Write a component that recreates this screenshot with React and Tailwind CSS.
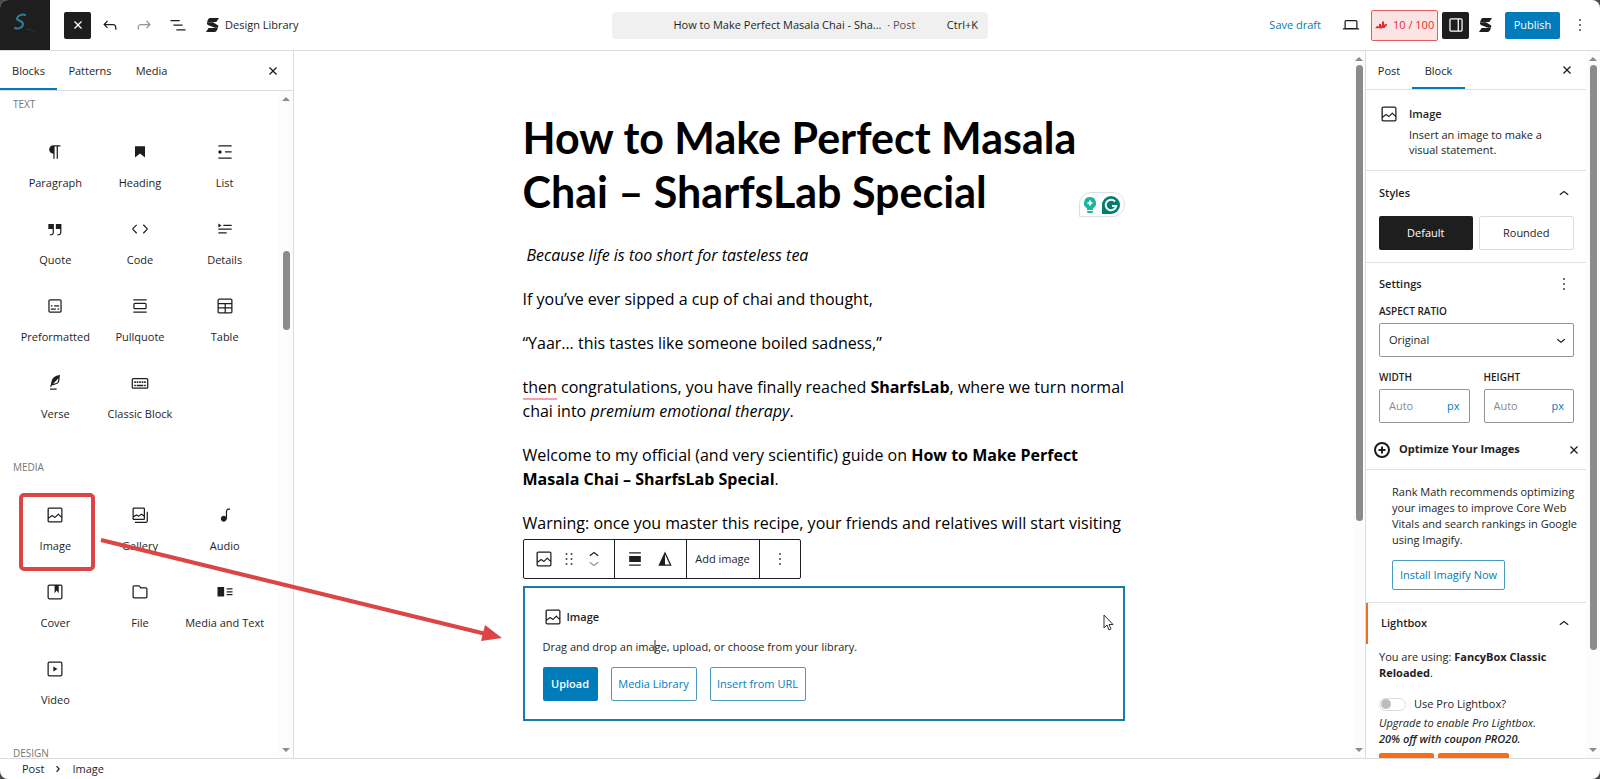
import React from 'react';
import clsx from 'clsx';

const icons = {
  paragraph: 'm9.99609 14v-.2251l.00391.0001v6.225h1.5v-14.5h2.5v14.5h1.5v-14.5h3v-1.5h-8.50391c-2.76142 0-5 2.23858-5 5 0 2.7614 2.23858 5 5 5z',
  heading: 'M6 5V18.5911L12 13.8473L18 18.5911V5H6Z',
  list: 'M4 4v1.5h16V4H4zm8 8.5h8V11h-8v1.5zM4 20h16v-1.5H4V20zm4-8c0-1.1-.9-2-2-2s-2 .9-2 2 .9 2 2 2 2-.9 2-2z',
  quote: 'M13 6v6h5.2v4c0 .8-.2 1.4-.5 1.7-.6.6-1.6.6-2.5.5h-.3v1.5h.5c1 0 2.3-.1 3.3-1 .6-.6 1-1.6 1-2.8V6H13zm-9 6h5.2v4c0 .8-.2 1.4-.5 1.7-.6.6-1.6.6-2.5.5h-.3v1.5h.5c1 0 2.3-.1 3.3-1 .6-.6 1-1.6 1-2.8V6H4v6z',
  code: 'M20.8 10.7l-4.3-4.3-1.1 1.1 4.3 4.3c.1.1.1.3 0 .4l-4.3 4.3 1.1 1.1 4.3-4.3c.7-.8.7-1.9 0-2.6zM4.2 11.8l4.3-4.3-1-1-4.3 4.3c-.7.7-.7 1.8 0 2.5l4.3 4.3 1.1-1.1-4.3-4.3c-.2-.1-.2-.3-.1-.4z',
  details: 'M4 16h10v1.5H4V16Zm0-4.5h16V13H4v-1.5ZM10 7h10v1.5H10V7ZM4 5.25l4 2.5-4 2.5v-5Z',
  preformatted: 'M18 4H6c-1.1 0-2 .9-2 2v12c0 1.1.9 2 2 2h12c1.1 0 2-.9 2-2V6c0-1.1-.9-2-2-2zm.5 14c0 .3-.2.5-.5.5H6c-.3 0-.5-.2-.5-.5V6c0-.3.2-.5.5-.5h12c.3 0 .5.2.5.5v12zM7 16.5h6V15H7v1.5zm4-4h6V11h-6v1.5zM9 11H7v1.5h2V11zm6 5.5h2V15h-2v1.5z',
  pullquote: 'M18 8H6c-1.1 0-2 .9-2 2v4c0 1.1.9 2 2 2h12c1.1 0 2-.9 2-2v-4c0-1.1-.9-2-2-2zm.5 6c0 .3-.2.5-.5.5H6c-.3 0-.5-.2-.5-.5v-4c0-.3.2-.5.5-.5h12c.3 0 .5.2.5.5v4zM4 4v1.5h16V4H4zm0 16h16v-1.5H4V20z',
  table: 'M19 3H5c-1.1 0-2 .9-2 2v14c0 1.1.9 2 2 2h14c1.1 0 2-.9 2-2V5c0-1.1-.9-2-2-2ZM5 4.5h14c.3 0 .5.2.5.5v3.5h-15V5c0-.3.2-.5.5-.5Zm8 5.5h6.5v3.5H13V10Zm-1.5 3.5h-7V10h7v3.5Zm-7 5.5v-4h7v4.5H5c-.3 0-.5-.2-.5-.5Zm14.5.5h-6V15h6.5v4c0 .3-.2.5-.5.5Z',
  verse: 'M17.8 2l-.9.3c-.1 0-3.6 1-5.2 2.1C10 5.5 9.3 6.5 8.9 7.1c-.6.9-1.7 4.7-1.7 6.3l-.9 2.3c-.2.4 0 .8.4 1 .1 0 .2.1.3.1.3 0 .6-.2.7-.5l.6-1.5c.3 0 .7-.1 1.2-.2.7-.1 1.4-.3 2.2-.5.8-.2 1.6-.5 2.4-.8.7-.3 1.4-.7 1.9-1.2s.8-1.2 1-1.9c.2-.7.3-1.6.4-2.4.1-.8.1-1.7.2-2.5 0-.8.1-1.5.2-2.1V2zm-1.9 5.6c-.1.8-.2 1.5-.3 2.1-.2.6-.4 1-.6 1.3-.3.3-.8.6-1.4.9-.7.3-1.4.5-2.2.8-.6.2-1.3.3-1.8.4L15 7.5c.3-.3.6-.7 1-1.1 0 .4 0 .8-.1 1.2zM6 20h8v-1.5H6V20z',
  classic: 'M20 6H4c-1.1 0-2 .9-2 2v9c0 1.1.9 2 2 2h16c1.1 0 2-.9 2-2V8c0-1.1-.9-2-2-2zm.5 11c0 .3-.2.5-.5.5H4c-.3 0-.5-.2-.5-.5V8c0-.3.2-.5.5-.5h16c.3 0 .5.2.5.5v9zM10 10H8v2h2v-2zm-5 2h2v-2H5v2zm8-2h-2v2h2v-2zm-5 6h8v-2H8v2zm6-4h2v-2h-2v2zm3 0h2v-2h-2v2zm0 4h2v-2h-2v2zM5 16h2v-2H5v2z',
  image: 'M19 3H5c-1.1 0-2 .9-2 2v14c0 1.1.9 2 2 2h14c1.1 0 2-.9 2-2V5c0-1.1-.9-2-2-2zM5 4.5h14c.3 0 .5.2.5.5v8.4l-3-2.9c-.3-.3-.8-.3-1 0L11.9 14 9 12c-.3-.2-.6-.2-.8 0l-3.6 2.6V5c-.1-.3.1-.5.4-.5zm14 15H5c-.3 0-.5-.2-.5-.5v-2.4l4.1-3 3 1.9c.3.2.7.2.9-.1L16 12l3.5 3.4V19c0 .3-.2.5-.5.5z',
  gallery: 'M16.375 4.5H4.625a.125.125 0 0 0-.125.125v8.254l2.859-1.54a.75.75 0 0 1 .68-.016l2.384 1.142 2.89-2.074a.75.75 0 0 1 .874 0l2.313 1.66V4.625a.125.125 0 0 0-.125-.125Zm.125 9.398-2.75-1.975-2.813 2.02a.75.75 0 0 1-.76.067l-2.444-1.17L4.5 14.583v1.792c0 .069.056.125.125.125h11.75a.125.125 0 0 0 .125-.125v-2.477ZM4.625 3C3.728 3 3 3.728 3 4.625v11.75C3 17.273 3.728 18 4.625 18h11.75c.898 0 1.625-.727 1.625-1.625V4.625C18 3.728 17.273 3 16.375 3H4.625ZM20 8v11c0 .69-.31 1-.999 1H6v1.5h13.001c1.52 0 2.499-.982 2.499-2.5V8H20Z',
  audio: 'M17.7 4.3c-1.2 0-2.8 0-3.8 1-.6.6-.9 1.5-.9 2.6V14c-.6-.6-1.5-1-2.5-1C8.6 13 7 14.6 7 16.5S8.6 20 10.5 20c1.5 0 2.8-1 3.3-2.3.5-.8.7-1.8.7-2.5V7.9c0-.7.2-1.2.5-1.6.6-.6 1.8-.6 2.8-.6h.3V4.3h-.4z',
  cover: 'M18.7 3H5.3C4 3 3 4 3 5.3v13.4C3 20 4 21 5.3 21h13.4c1.3 0 2.3-1 2.3-2.3V5.3C21 4 20 3 18.7 3zm.8 15.7c0 .4-.4.8-.8.8H5.3c-.4 0-.8-.4-.8-.8V5.3c0-.4.4-.8.8-.8h6.2v8.9l2.5-3.1 2.5 3.1V4.5h2.2c.4 0 .8.4.8.8v13.4z',
  file: 'M19 6.2h-5.9l-.6-1.1c-.3-.7-1-1.1-1.8-1.1H5c-1.1 0-2 .9-2 2v11.8c0 1.1.9 2 2 2h14c1.1 0 2-.9 2-2V8.2c0-1.1-.9-2-2-2zm.5 11.6c0 .3-.2.5-.5.5H5c-.3 0-.5-.2-.5-.5V6c0-.3.2-.5.5-.5h5.8c.2 0 .4.1.4.3l1 2H19c.3 0 .5.2.5.5v9.5z',
  mediaText: 'M3 6v11.5h8V6H3Zm11 3h7V7.5h-7V9Zm7 3.5h-7V11h7v1.5ZM14 16h7v-1.5h-7V16Z',
  video: 'M18.7 3H5.3C4 3 3 4 3 5.3v13.4C3 20 4 21 5.3 21h13.4c1.3 0 2.3-1 2.3-2.3V5.3C21 4 20 3 18.7 3zm.8 15.7c0 .4-.4.8-.8.8H5.3c-.4 0-.8-.4-.8-.8V5.3c0-.4.4-.8.8-.8h13.4c.4 0 .8.4.8.8v13.4zM10 15l5-3-5-3v6z',
  undo: 'M18.3 11.7c-.6-.6-1.4-.9-2.3-.9H6.7l2.9-3.3-1.1-1-4.5 5L8.5 16l1-1-2.7-2.7H16c.5 0 .9.2 1.3.5 1 1 1 3.4 1 4.5v.3h1.5v-.2c0-1.5 0-4.3-1.5-5.7z',
  redo: 'M15.6 6.5l-1.1 1 2.9 3.3H8c-.9 0-1.7.3-2.3.9-1.4 1.5-1.4 4.2-1.4 5.6v.2h1.5v-.3c0-1.1 0-3.5 1-4.5.3-.3.7-.5 1.3-.5h9.2L14.5 15l1.1 1.1 4.6-4.6-4.6-5z',
  listView: 'M3 6h11v1.5H3V6Zm3.5 5.5h11V13h-11v-1.5ZM21 17H10v1.5h11V17Z',
  desktop: 'M20.5 16h-.7V8c0-1.1-.9-2-2-2H6.2c-1.1 0-2 .9-2 2v8h-.7c-.8 0-1.5.7-1.5 1.5h20c0-.8-.7-1.5-1.5-1.5zM5.7 8c0-.3.2-.5.5-.5h11.6c.3 0 .5.2.5.5v7.6H5.7V8z',
  drawer: 'M18 4H6c-1.1 0-2 .9-2 2v12c0 1.1.9 2 2 2h12c1.1 0 2-.9 2-2V6c0-1.1-.9-2-2-2zm-4 14.5H6c-.3 0-.5-.2-.5-.5V6c0-.3.2-.5.5-.5h8v13zm4.5-.5c0 .3-.2.5-.5.5h-2.5v-13H18c.3 0 .5.2.5.5v12z',
  more: 'M13 19h-2v-2h2v2zm0-6h-2v-2h2v2zm0-6h-2V5h2v2z',
  close: 'M12 13.06l3.712 3.713 1.061-1.06L13.061 12l3.712-3.712-1.06-1.06L12 10.938 8.288 7.227l-1.061 1.06L10.939 12l-3.712 3.712 1.06 1.061L12 13.061z',
  up: 'M6.5 12.4L12 8l5.5 4.4-.9 1.2L12 10l-4.5 3.6-1-1.2z',
  down: 'M17.5 11.6L12 16l-5.5-4.4.9-1.2L12 14l4.5-3.6 1 1.2z',
  right: 'M10.8622 8.04053L14.2805 12.0286L10.8622 16.0167L9.72327 15.0405L12.3049 12.0286L9.72327 9.01672L10.8622 8.04053Z',
  drag: 'M8 7h2V5H8v2zm0 6h2v-2H8v2zm0 6h2v-2H8v2zm6-14v2h2V5h-2zm0 8h2v-2h-2v2zm0 6h2v-2h-2v2z',
  align: 'M19 5.5H5V4h14v1.5ZM19 20H5v-1.5h14V20ZM5 8.5h14v7H5v-7Z',
  duotone: 'M12 3 4 20h16L12 3Zm0 3.6 5.6 11.9H12V6.6Z',
};

function Icon({ name, className = 'size-5' }) {
  return (
    <svg viewBox="0 0 24 24" fill="currentColor" fillRule="evenodd" className={clsx('shrink-0', className)} aria-hidden="true">
      <path d={icons[name]} />
    </svg>
  );
}

// Slanted bars folded into an "S"
function StackLogo() {
  return (
    <svg viewBox="0 0 13 14" className="h-[14px] w-[13px] shrink-0" fill="currentColor" aria-hidden="true">
      <path d="M3.500 0H13l-2.700 4H1.200C1.500 2.500 2.200.8 3.500 0Z" />
      <path d="M1 4.300h6l5.200 3.200c.3.800.1 1.500-.4 2.200H9L1.800 7C1 6.200.8 5.200 1 4.300Z" />
      <path d="M2.600 10h9.200c-.4 1.800-1.300 3.300-2.600 4H0Z" />
    </svg>
  );
}

const textBlocks = [
  ['paragraph', 'Paragraph'],
  ['heading', 'Heading'],
  ['list', 'List'],
  ['quote', 'Quote'],
  ['code', 'Code'],
  ['details', 'Details'],
  ['preformatted', 'Preformatted'],
  ['pullquote', 'Pullquote'],
  ['table', 'Table'],
  ['verse', 'Verse'],
  ['classic', 'Classic Block'],
];

const mediaBlocks = [
  ['image', 'Image'],
  ['gallery', 'Gallery'],
  ['audio', 'Audio'],
  ['cover', 'Cover'],
  ['file', 'File'],
  ['mediaText', 'Media and Text'],
  ['video', 'Video'],
];

function BlockGrid({ blocks }) {
  return (
    <div className="grid grid-cols-3 pr-3 pl-[13px]">
      {blocks.map(([icon, label]) => (
        <button key={label} type="button" className="flex h-[77px] flex-col items-center justify-center gap-[13px] leading-4 whitespace-nowrap">
          <Icon name={icon} />
          {label}
        </button>
      ))}
    </div>
  );
}

// Thumb placement is given as growing spacers so it follows the track height
function Scrollbar({ before, thumb, after, className = 'w-[14px]' }) {
  return (
    <div className={clsx('flex shrink-0 flex-col items-center bg-[#fcfcfc] py-[6px]', className)} aria-hidden="true">
      <div className="border-x-4 border-b-4 border-x-transparent border-b-[#8b8b8b]" />
      <div className="my-1 flex w-[7px] grow flex-col">
        <div style={{ flexGrow: before }} />
        <div className="rounded-full bg-[#8b8b8b]" style={{ flexGrow: thumb }} />
        <div style={{ flexGrow: after }} />
      </div>
      <div className="border-x-4 border-t-4 border-x-transparent border-t-[#8b8b8b]" />
    </div>
  );
}

function Header() {
  return (
    <header className="flex h-[51px] shrink-0 items-center border-b border-[#dcdcdc]">
      <div className="flex flex-1 items-center">
        <a href="#dashboard" aria-label="Dashboard" className="flex size-[50px] items-start bg-[#1e1e1e] pt-3 pl-[13px]">
          <svg viewBox="0 0 24 22" className="h-[22px] w-6" fill="none" aria-hidden="true">
            <path d="M12 3C9 1.500 4.500 3.500 4 6.500c-.3 2.500 6 2 6 5.500 0 3.500-5 5.500-8 4" stroke="#2b7d98" strokeWidth="2" strokeLinecap="round" />
            <path d="M13 17.500c3-1 6 1 9 2.500" stroke="#26382f" strokeWidth="1" />
          </svg>
        </a>
        <button type="button" aria-label="Close inserter" className="ml-[14px] flex size-[27px] items-center justify-center rounded-xs bg-[#1e1e1e] text-white">
          <Icon name="close" />
        </button>
        <div className="ml-[9px] flex items-center gap-[14px]">
          <button type="button" aria-label="Undo"><Icon name="undo" /></button>
          <button type="button" aria-label="Redo" className="text-[#949494]"><Icon name="redo" /></button>
          <button type="button" aria-label="Document overview"><Icon name="listView" /></button>
        </div>
        <button type="button" className="ml-[18px] flex items-center gap-[6px]">
          <StackLogo />
          Design Library
        </button>
      </div>
      <button type="button" className="flex h-[27px] w-[376px] items-center rounded-sm bg-[#f0f0f0] px-[10px] whitespace-nowrap">
        <span className="flex-1 pl-5 text-center">
          How to Make Perfect Masala Chai - Sha... &nbsp;<span className="text-[#555]">· Post</span>
        </span>
        <span>Ctrl+K</span>
      </button>
      <div className="flex flex-1 items-center justify-end">
        <button type="button" className="text-[#007cba]">Save draft</button>
        <button type="button" aria-label="View" className="ml-5"><Icon name="desktop" /></button>
        <button type="button" className="ml-[10px] flex h-[31px] w-[67px] items-center gap-[6px] rounded-xs border border-[#e35b5b] bg-[#fde4e4] pl-[3px] text-[#e02f2f]">
          <svg viewBox="0 0 12 8" className="h-2 w-3 shrink-0" fill="currentColor" aria-hidden="true">
            <path d="M0 7.500 1.500 6V5H3v1l1-1V3h2v2l1-1V1l2-1v3.500L12 3v1.500L10 6v1H8v-.5L7 7.500H4V7Z" />
          </svg>
          10 / 100
        </button>
        <button type="button" aria-label="Settings" className="ml-1 flex size-[27px] items-center justify-center rounded-xs bg-[#1e1e1e] text-white">
          <Icon name="drawer" />
        </button>
        <button type="button" aria-label="Stackable" className="ml-[10px]"><StackLogo /></button>
        <button type="button" className="ml-[13px] h-[27px] w-[55px] rounded-xs bg-[#007cba] font-medium text-white">Publish</button>
        <button type="button" aria-label="Options" className="mx-[10px]"><Icon name="more" /></button>
      </div>
    </header>
  );
}

function Tab({ selected, className, children }) {
  return (
    <button
      type="button"
      role="tab"
      aria-selected={selected}
      className={clsx('border-b-2 pt-1', selected ? 'border-[#007cba]' : 'border-transparent', className)}
    >
      {children}
    </button>
  );
}

function Inserter() {
  return (
    <aside className="flex w-[294px] shrink-0 flex-col border-r border-[#dcdcdc]">
      <div role="tablist" className="flex h-10 shrink-0 items-stretch border-b border-[#dcdcdc]">
        <Tab selected className="w-[57px]">Blocks</Tab>
        <Tab selected={false} className="w-[66px]">Patterns</Tab>
        <Tab selected={false} className="w-[57px]">Media</Tab>
        <button type="button" aria-label="Close" className="mr-[10px] ml-auto"><Icon name="close" /></button>
      </div>
      <div className="flex min-h-0 flex-1">
        <div className="flex-1 overflow-hidden">
          <h2 className="pt-[5px] pl-[13px] text-[10px]/4 text-[#757575]">TEXT</h2>
          <div className="pt-4"><BlockGrid blocks={textBlocks} /></div>
          <h2 className="pt-[23px] pl-[13px] text-[10px]/4 text-[#757575]">MEDIA</h2>
          <div className="pt-4"><BlockGrid blocks={mediaBlocks} /></div>
          <h2 className="pt-[23px] pl-[13px] text-[10px]/4 text-[#757575]">DESIGN</h2>
        </div>
        <Scrollbar before={146} thumb={79} after={413} />
      </div>
    </aside>
  );
}

function BlockToolbar() {
  return (
    <div className="mt-1 flex h-10 w-[278px] items-stretch rounded-xs border border-[#1e1e1e] bg-white text-[11px] text-[#1e1e1e]">
      <div className="flex flex-1 items-center justify-center gap-[5px] border-r border-[#1e1e1e]">
        <button type="button" aria-label="Image"><Icon name="image" /></button>
        <button type="button" aria-label="Drag"><Icon name="drag" /></button>
        <div className="flex flex-col">
          <button type="button" aria-label="Move up" className="h-[14px] overflow-hidden"><Icon name="up" /></button>
          <button type="button" aria-label="Move down" className="flex h-[14px] items-end overflow-hidden text-[#949494]"><Icon name="down" /></button>
        </div>
      </div>
      <div className="flex w-[72px] items-center justify-center gap-[10px] border-r border-[#1e1e1e]">
        <button type="button" aria-label="Align"><Icon name="align" /></button>
        <button type="button" aria-label="Duotone"><Icon name="duotone" /></button>
      </div>
      <button type="button" className="w-[73px] border-r border-[#1e1e1e]">Add image</button>
      <button type="button" aria-label="Options" className="flex w-10 items-center justify-center"><Icon name="more" /></button>
    </div>
  );
}

function ImageBlock() {
  return (
    <section className="mt-[7px] flex h-[135px] flex-col border-2 border-[#1a7aa8] bg-white px-[18px] pt-[19px] text-[11px] text-[#1e1e1e]">
      <h3 className="flex h-5 items-center gap-1 font-semibold">
        <Icon name="image" />
        Image
      </h3>
      <p className="mt-3 leading-4">Drag and drop an image, upload, or choose from your library.</p>
      <div className="mt-3 flex gap-[13px]">
        <button type="button" className="h-[34px] w-[55px] rounded-xs bg-[#007cba] font-semibold text-white">Upload</button>
        <button type="button" className="h-[34px] w-[86px] rounded-xs border border-[#4a9cc4] text-[#007cba]">Media Library</button>
        <button type="button" className="h-[34px] w-[96px] rounded-xs border border-[#4a9cc4] text-[#007cba]">Insert from URL</button>
      </div>
    </section>
  );
}

function Editor() {
  return (
    <main className="flex min-w-0 flex-1">
      <div className="min-w-0 flex-1 overflow-hidden">
        <article className="mx-auto w-[602px] pt-[60px] text-[16px]/6 text-black">
          <div className="relative">
            <h1 className="font-[Lato,sans-serif] text-[43px]/[54px] font-bold">
              How to Make Perfect Masala
              <br />
              Chai – SharfsLab Special
            </h1>
            <span className="absolute right-0 bottom-0.5 flex h-[25px] w-[46px] items-center justify-center gap-1 rounded-t-xl rounded-br-xl border border-[#dcdfe6] bg-white">
              <svg viewBox="0 0 14 20" className="h-5 w-[14px]" aria-hidden="true">
                <path d="M7 2a6 6 0 0 0-3 11.200V15h6v-1.800A6 6 0 0 0 7 2Z" fill="#15b79e" />
                <path d="M7 4.500 8.200 7l2.300 1-2.300 1L7 11.500 5.800 9 3.500 8l2.300-1L7 4.500Z" fill="#fff" />
                <path d="M4 16h6v1l-1 1H5l-1-1v-1Z" fill="#15b79e" />
              </svg>
              <svg viewBox="0 0 20 20" className="size-5" aria-hidden="true">
                <path d="M10 1a9 9 0 1 1 0 18H1v-9a9 9 0 0 1 9-9Z" fill="#027e6f" />
                <path d="M14 6.500A5.300 5.300 0 1 0 15.200 11H11" fill="none" stroke="#fff" strokeWidth="2" />
              </svg>
            </span>
          </div>
          <div className="flex flex-col gap-5 pt-6">
            <p className="pl-1"><em>Because life is too short for tasteless tea</em></p>
            <p>If you’ve ever sipped a cup of chai and thought,</p>
            <p>“Yaar… this tastes like someone boiled sadness,”</p>
            <p>
              <span className="border-b-2 border-[#f59fb0]">then</span> congratulations, you have finally reached <strong>SharfsLab</strong>, where we turn normal chai into <em>premium emotional therapy</em>.
            </p>
            <p>
              Welcome to my official (and very scientific) guide on <strong>How to Make Perfect Masala Chai – SharfsLab Special</strong>.
            </p>
            <p className="whitespace-nowrap">Warning: once you master this recipe, your friends and relatives will start visiting</p>
          </div>
          <BlockToolbar />
          <ImageBlock />
        </article>
      </div>
      <Scrollbar before={0} thumb={454} after={222} className="w-3" />
    </main>
  );
}

function SizeField({ id, label }) {
  return (
    <div className="min-w-0 flex-1">
      <label htmlFor={id} className="block text-[10px]/4 font-semibold">{label}</label>
      <div className="mt-1 flex h-[34px] items-center rounded-xs border border-[#949494] px-[9px]">
        <input id={id} type="text" placeholder="Auto" className="w-0 flex-1 outline-none placeholder:text-[#8a8a8a]" />
        <button type="button" className="text-[#007cba]">px</button>
      </div>
    </div>
  );
}

function Settings() {
  return (
    <aside className="flex w-[235px] shrink-0 border-l border-[#dcdcdc]">
      <div className="min-w-0 flex-1 overflow-hidden">
        <div role="tablist" className="flex h-[39px] items-stretch border-b border-[#e0e0e0]">
          <Tab selected={false} className="w-[46px]">Post</Tab>
          <Tab selected className="w-[53px]">Block</Tab>
          <button type="button" aria-label="Close" className="mr-[9px] ml-auto"><Icon name="close" /></button>
        </div>

        <div className="flex h-[81px] gap-[10px] border-b border-[#e0e0e0] pt-[14px] pl-[13px]">
          <Icon name="image" />
          <div>
            <h2 className="leading-5 font-semibold">Image</h2>
            <p className="pt-[3px] leading-[15px]">Insert an image to make a<br />visual statement.</p>
          </div>
        </div>

        <div className="h-[92px] border-b border-[#e0e0e0] pr-3 pl-[13px]">
          <h2>
            <button type="button" className="flex h-[45px] w-full items-center justify-between font-semibold">
              Styles
              <Icon name="up" />
            </button>
          </h2>
          <div className="flex gap-[6px]">
            <button type="button" className="h-[34px] flex-1 rounded-xs bg-[#1e1e1e] text-white">Default</button>
            <button type="button" className="h-[34px] flex-1 rounded-xs border border-[#dcdcdc]">Rounded</button>
          </div>
        </div>

        <div className="pr-3 pl-[13px]">
          <div className="flex h-10 items-center justify-between pt-[2px]">
            <h2 className="font-semibold">Settings</h2>
            <button type="button" aria-label="Settings options"><Icon name="more" /></button>
          </div>
          <label htmlFor="ratio" className="block text-[10px]/4 font-semibold">ASPECT RATIO</label>
          <div className="relative mt-1">
            <select id="ratio" className="h-[34px] w-full appearance-none rounded-xs border border-[#949494] px-[9px]">
              <option>Original</option>
            </select>
            <Icon name="down" className="pointer-events-none absolute top-2 right-1 size-[18px]" />
          </div>
          <div className="mt-3 flex gap-[14px]">
            <SizeField id="width" label="WIDTH" />
            <SizeField id="height" label="HEIGHT" />
          </div>
        </div>

        <div className="mt-[7px] flex h-10 items-center border-b border-[#e0e0e0] pr-[2px] pl-2">
          <svg viewBox="0 0 16 16" className="size-4" fill="none" stroke="#1e1e1e" strokeWidth="2" aria-hidden="true">
            <circle cx="8" cy="8" r="7" />
            <path d="M8 4.500v7M4.500 8h7" />
          </svg>
          <h2 className="flex-1 pl-[9px] font-bold">Optimize Your Images</h2>
          <button type="button" aria-label="Dismiss"><Icon name="close" /></button>
        </div>
        <div className="h-[133px] border-b border-[#e0e0e0] pt-[14px] pl-[26px]">
          <p className="leading-4">
            Rank Math recommends optimizing<br />your images to improve Core Web<br />Vitals and search rankings in Google<br />using Imagify.
          </p>
          <button type="button" className="mt-3 h-[30px] w-[113px] rounded-xs border border-[#4a9cc4] text-[#007cba]">Install Imagify Now</button>
        </div>

        <h2>
          <button type="button" className="flex h-[41px] w-full items-center justify-between border-l-2 border-[#f56e16] pr-3 pl-[13px] font-semibold">
            Lightbox
            <Icon name="up" />
          </button>
        </h2>
        <div className="pt-[5px] pl-[13px] leading-4">
          <p>You are using: <strong>FancyBox Classic<br />Reloaded</strong>.</p>
          <label className="flex items-center gap-2 pt-[15px]">
            <input type="checkbox" className="peer sr-only" />
            <span className="flex h-[13px] w-[27px] items-center rounded-full border border-[#dcdcdc] px-px">
              <span className="size-[10px] rounded-full bg-[#bdbdbd]" />
            </span>
            Use Pro Lightbox?
          </label>
          <p className="pt-[3px] italic">Upgrade to enable Pro Lightbox.<br /><strong className="font-semibold">20% off with coupon PRO20.</strong></p>
          <div className="mt-[6px] flex gap-1">
            <a href="#upgrade" aria-label="Upgrade" className="h-6 w-[55px] rounded-xs bg-[#f56e16]" />
            <a href="#learn" aria-label="Learn more" className="h-6 w-[71px] rounded-xs bg-[#f56e16]" />
          </div>
        </div>
      </div>
      <Scrollbar before={0} thumb={582} after={94} />
    </aside>
  );
}

// Highlight box and arrow drawn over the editor
function Annotation() {
  return (
    <svg viewBox="0 0 520 660" className="pointer-events-none absolute top-0 left-0 h-[660px] w-[520px]" aria-hidden="true">
      <rect x="21" y="495" width="72" height="74" rx="3" fill="none" stroke="#dc4545" strokeWidth="4" />
      <path d="M101 540 486 634" stroke="#dc4545" strokeWidth="4" />
      <path d="M502 638 481 641 485 625Z" fill="#dc4545" />
    </svg>
  );
}

// Mouse arrow and text caret
function Pointer() {
  return (
    <svg viewBox="0 0 464 42" className="pointer-events-none absolute top-[613px] left-[650px] h-[42px] w-[464px]" aria-hidden="true">
      <path d="M454 2v13l3-3 2 5 2-1-2-4.500h4L454 2Z" fill="#fff" stroke="#333" />
      <path d="M5 27v13" stroke="#333" />
    </svg>
  );
}

export default function App() {
  return (
    <div className="h-screen bg-[#4a4a4a]">
      <div className="relative flex h-full flex-col overflow-hidden rounded-lg bg-white font-[Open_Sans,sans-serif] text-[11px] text-[#1e1e1e]">
        <Header />
        <div className="flex min-h-0 flex-1">
          <Inserter />
          <Editor />
          <Settings />
        </div>
        <footer className="flex h-[21px] shrink-0 items-center gap-1 border-t border-[#dcdcdc] pl-[22px]">
          <a href="#post">Post</a>
          <Icon name="right" />
          <span>Image</span>
        </footer>
        <Annotation />
        <Pointer />
      </div>
    </div>
  );
}
